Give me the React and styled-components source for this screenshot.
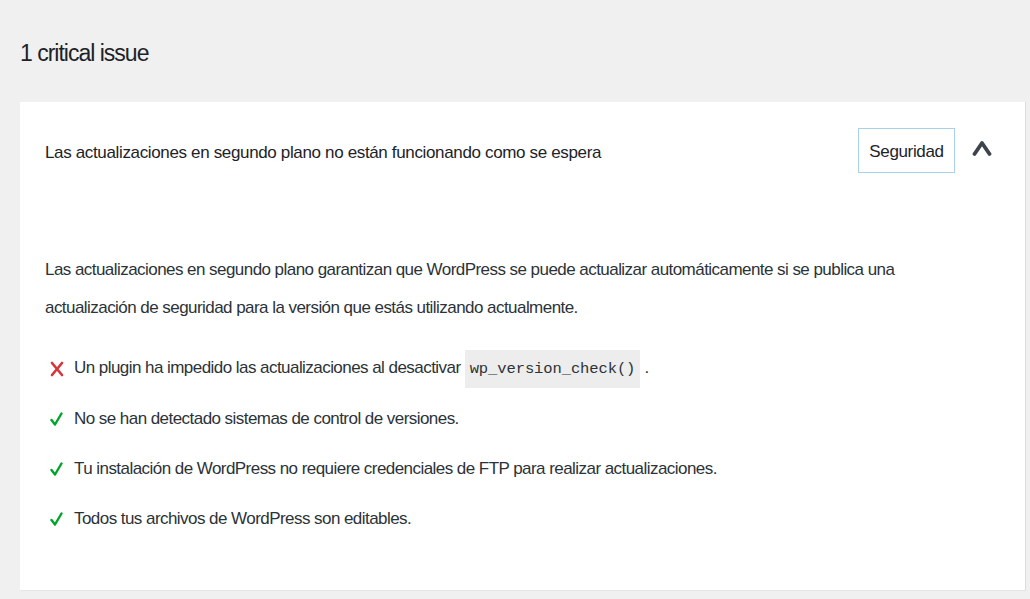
import React from 'react';
import styled, { createGlobalStyle } from 'styled-components';

const GlobalStyle = createGlobalStyle`
  html, body {
    margin: 0;
    padding: 0;
    background: #f0f0f1;
  }

  body {
    font-family: "Liberation Sans", Arial, sans-serif;
    color: #2c3338;
  }
`;

const CHECKS = [
  { status: 'error', text: 'Un plugin ha impedido las actualizaciones al desactivar ', code: 'wp_version_check()', after: ' .' },
  { status: 'good', text: 'No se han detectado sistemas de control de versiones.' },
  { status: 'good', text: 'Tu instalación de WordPress no requiere credenciales de FTP para realizar actualizaciones.' },
  { status: 'good', text: 'Todos tus archivos de WordPress son editables.' },
];

const Page = styled.div`
  padding: 0 4px 0 20px;
  min-height: 599px;
  box-sizing: border-box;
`;

const Title = styled.h2`
  margin: 0;
  padding: 38px 0 34px;
  font-size: 23px;
  line-height: 30px;
  letter-spacing: -1px;
  font-weight: 400;
  color: #1d2327;
`;

const Card = styled.section`
  background: #ffffff;
  border-right: 1px solid #dcdcde;
  border-bottom: 1px solid #e6e6e6;
  padding: 26px 25px 46px;
  font-size: 17px;
  letter-spacing: -0.35px;
`;

const Header = styled.div`
  display: flex;
  align-items: center;
  height: 45px;
`;

const HeaderTitle = styled.h3`
  flex: 1;
  margin: 0;
  font-size: 17px;
  font-weight: 400;
  line-height: 24px;
  padding-top: 4px;
  color: #1d2327;
`;

const Badge = styled.span`
  display: flex;
  align-items: center;
  justify-content: center;
  width: 97px;
  height: 45px;
  box-sizing: border-box;
  padding-top: 2px;
  border: 1px solid #a9d1ec;
  color: #1d2327;
`;

const Toggle = styled.button`
  display: flex;
  align-items: center;
  justify-content: center;
  width: 46px;
  height: 45px;
  padding: 0 0 6px;
  margin: 0 -5px 0 4px;
  border: 0;
  background: none;
  color: #3c434a;
  cursor: pointer;
`;

const Body = styled.div`
  padding-top: 78px;
  letter-spacing: -0.55px;
`;

const Description = styled.p`
  margin: 0 0 17px;
  max-width: 885px;
  line-height: 38px;
`;

const CheckList = styled.ul`
  margin: 0;
  padding: 0;
  list-style: none;
`;

const CheckItem = styled.li`
  display: flex;
  align-items: center;
  height: 50px;
`;

const StatusIcon = styled.span`
  display: inline-flex;
  width: 16px;
  margin: 0 8px 0 5px;
  color: ${(p) => (p.$status === 'error' ? '#d63638' : '#00a32a')};
`;

const Code = styled.code`
  display: inline-flex;
  align-items: center;
  height: 38px;
  padding: 0 5px;
  background: #ededed;
  font-family: "Liberation Mono", "DejaVu Sans Mono", monospace;
  font-size: 15.5px;
  letter-spacing: -0.1px;
  color: #2c3338;
`;

function ErrorIcon() {
  return (
    <svg width="14" height="16" viewBox="0 0 14 16">
      <path d="M2 2 L12 14 M12 2 L2 14" stroke="currentColor" strokeWidth="2.6" strokeLinecap="round" fill="none" />
    </svg>
  );
}

function GoodIcon() {
  return (
    <svg width="13" height="16" viewBox="0 0 13 16">
      <path d="M1.5 9 L5 13.5 L11.5 2.5" stroke="currentColor" strokeWidth="2.4" strokeLinecap="round" strokeLinejoin="round" fill="none" />
    </svg>
  );
}

function Chevron() {
  return (
    <svg width="20" height="18" viewBox="0 0 20 18">
      <path d="M2.5 15 L10 4 L17.5 15" stroke="currentColor" strokeWidth="3.8" strokeLinecap="round" strokeLinejoin="round" fill="none" />
    </svg>
  );
}

function renderCheck(check, index) {
  return (
    <CheckItem key={index}>
      <StatusIcon $status={check.status}>{check.status === 'error' ? <ErrorIcon /> : <GoodIcon />}</StatusIcon>
      <span>
        {check.text}
        {check.code && <Code>{check.code}</Code>}
        {check.after}
      </span>
    </CheckItem>
  );
}

export default function App() {
  return (
    <>
      <GlobalStyle />
      <Page>
        <Title>1 critical issue</Title>

        <Card>
          <Header>
            <HeaderTitle>Las actualizaciones en segundo plano no están funcionando como se espera</HeaderTitle>
            <Badge>Seguridad</Badge>
            <Toggle aria-label="Collapse">
              <Chevron />
            </Toggle>
          </Header>

          <Body>
            <Description>
              Las actualizaciones en segundo plano garantizan que WordPress se puede actualizar automáticamente si se
              publica una actualización de seguridad para la versión que estás utilizando actualmente.
            </Description>

            <CheckList>{CHECKS.map((check, index) => renderCheck(check, index))}</CheckList>
          </Body>
        </Card>
      </Page>
    </>
  );
}
